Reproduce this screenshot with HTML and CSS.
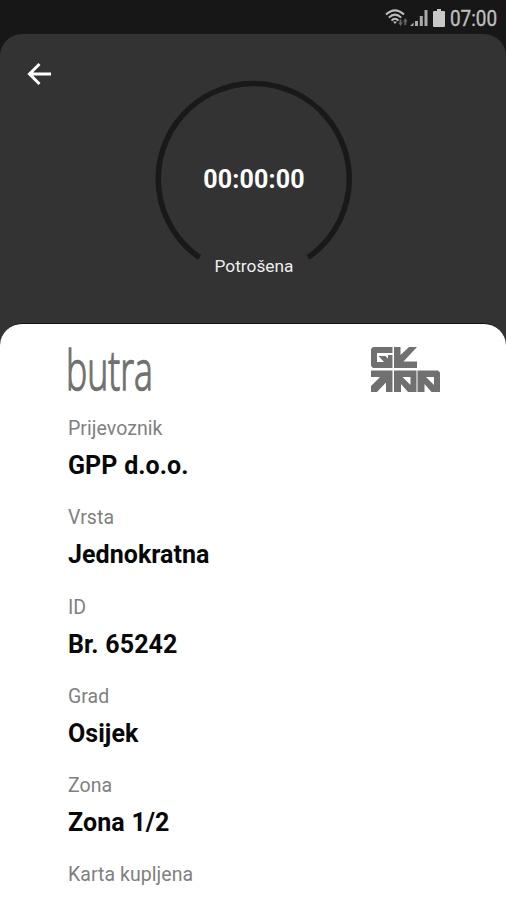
FILE: index.html
```html
<!DOCTYPE html>
<html lang="hr">
<head>
    <meta charset="UTF-8">
    <meta name="viewport" content="width=device-width, initial-scale=1.0">
    <title>Karta</title>
    <link rel="stylesheet" href="styles.css">
</head>
<body>
    <div class="status-bar">
        <svg class="wifi" width="24" height="18" viewBox="0 0 24 18">
            <g fill="none" stroke="#bdbdbd" stroke-width="2">
                <path d="M1 5.6Q10 -2.8 19 5.6"/>
                <path d="M3.8 8.6Q10 2.6 16.2 8.6"/>
                <path d="M6.5 11.6Q10 8 13.5 11.6"/>
            </g>
            <path fill="#bdbdbd" d="M8 12.6h4L10 15z"/>
            <path fill="#666" d="M13.2 13.6h1.4v-3h1.8v3h1.4L15.5 17zM18 12.5h1.4V16h1.8v-3.5h1.4L20.3 9z"/>
        </svg>
        <svg class="signal" width="18" height="18" viewBox="0 0 18 18">
            <path fill="#aaa" d="M0 17h3.5v-3.5zM5 12h3v5H5zM9.8 7h3v10h-3zM14.5 1h3v16h-3z"/>
        </svg>
        <svg class="battery" width="12" height="18" viewBox="0 0 12 18">
            <path fill="#c8c8c8" d="M4 0h4v2h3q1 0 1 1v14q0 1-1 1H1q-1 0-1-1V3q0-1 1-1h3z"/>
        </svg>
        <svg class="clock" width="52" height="24" viewBox="0 0 52 24">
            <text x="0" y="17" textLength="47" lengthAdjust="spacingAndGlyphs">07:00</text>
        </svg>
    </div>

    <main class="screen">
        <header class="ticket-header">
            <svg class="back" width="26" height="24" viewBox="0 0 26 24">
                <path d="M24 12H3M12.5 2L2.5 12l10 10"/>
            </svg>
            <div class="timer">
                <svg class="ring" width="198" height="182" viewBox="0 0 198 182">
                    <path d="M44.5 178.500A95.500 95.500 0 1 1 153 178.500"/>
                </svg>
                <span class="time">00:00:00</span>
                <span class="state">Potrošena</span>
            </div>
        </header>

        <section class="ticket">
            <div class="logos">
                <svg class="butra" width="92" height="68" viewBox="0 0 92 68">
                    <text x="-2" y="44.5" textLength="87" lengthAdjust="spacingAndGlyphs">butra</text>
                </svg>
                <svg class="operator" width="69" height="46" viewBox="0 0 69 46">
                    <path d="M2 0h19.5v6H6v9h7L7.500 9h7l2.500 2.500V8h4.500v13H2L0 19V2z"/>
                    <path d="M23 0h6.500v8L38 0h8L32.500 14.500H46V21H23z"/>
                    <path d="M0 23.500h21.500V45H15v-9.500L6 45H0v-6l9-9H0z"/>
                    <path d="M23 23.500h22.500V45H37l-7-8v8h-7zM31.500 30l8 8v-8z"/>
                    <path d="M46.500 23.500H67l2 2V45h-8.500l-7-8v8h-7zM55 30l8 8v-8z"/>
                </svg>
            </div>
            <dl class="details">
                <dt>Prijevoznik</dt>
                <dd>GPP d.o.o.</dd>
                <dt>Vrsta</dt>
                <dd>Jednokratna</dd>
                <dt>ID</dt>
                <dd>Br. 65242</dd>
                <dt>Grad</dt>
                <dd>Osijek</dd>
                <dt>Zona</dt>
                <dd>Zona 1/2</dd>
                <dt>Karta kupljena</dt>
            </dl>
        </section>
    </main>
</body>
</html>
```
FILE: styles.css
```css
:root {
    --bar-color: #171717;
    --header-color: #333333;
    --logo-color: #707070;
}

* {
    box-sizing: border-box;
}

body {
    margin: 0;
    height: 900px;
    overflow: hidden;
    font-family: Roboto, sans-serif;
    background-color: var(--bar-color);
}

.status-bar {
    display: flex;
    justify-content: flex-end;
    height: 34px;
    padding: 9px 4px 0 0;
}

.signal {
    margin-left: 1px;
}

.battery {
    margin-left: 5px;
}

.clock {
    margin-left: 5px;
    overflow: visible;
}

.clock text {
    font-size: 22px;
    fill: #bdbdbd;
    stroke: #bdbdbd;
    stroke-width: 0.4;
}

.screen {
    background-color: var(--header-color);
    border-radius: 22px 22px 0 0;
}

.ticket-header {
    display: flex;
    align-items: flex-start;
    height: 289px;
    padding: 28px 0 0 27px;
}

.back {
    fill: none;
    stroke: #ffffff;
    stroke-width: 3;
}

.timer {
    display: grid;
    width: 198px;
    margin: 17px 0 0 102px;
    justify-items: center;
}

.ring {
    grid-area: 1 / 1;
    fill: none;
    stroke: #191919;
    stroke-width: 5.5;
}

.time {
    grid-area: 1 / 1;
    align-self: center;
    padding-top: 19px;
    font-size: 25px;
    font-weight: 700;
    letter-spacing: 0.2px;
    color: #ffffff;
}

.state {
    margin-top: -6px;
    font-size: 17.3px;
    line-height: 22px;
    color: #eeeeee;
}

.ticket {
    height: 577px;
    padding: 23px 66px 0 68px;
    background-color: #ffffff;
    border-top: 1px solid #111111;
    border-radius: 22px 22px 0 0;
}

.logos {
    display: flex;
    justify-content: space-between;
    height: 69px;
}

.butra {
    margin-top: -2px;
    overflow: visible;
}

.butra text {
    font-family: "Open Sans", sans-serif;
    font-size: 56px;
    font-weight: 300;
    fill: var(--logo-color);
    stroke: var(--logo-color);
    stroke-width: 1.4;
}

.operator {
    fill: var(--logo-color);
    fill-rule: evenodd;
}

.details {
    margin: 0;
}

.details dt {
    font-size: 19.5px;
    line-height: 26px;
    letter-spacing: 0.05px;
    color: #808080;
}

.details dd {
    margin: 8px 0 23.3px;
    font-size: 25px;
    font-weight: 700;
    line-height: 32px;
    letter-spacing: 0.05px;
    word-spacing: 0.5px;
    color: #080808;
}
```
